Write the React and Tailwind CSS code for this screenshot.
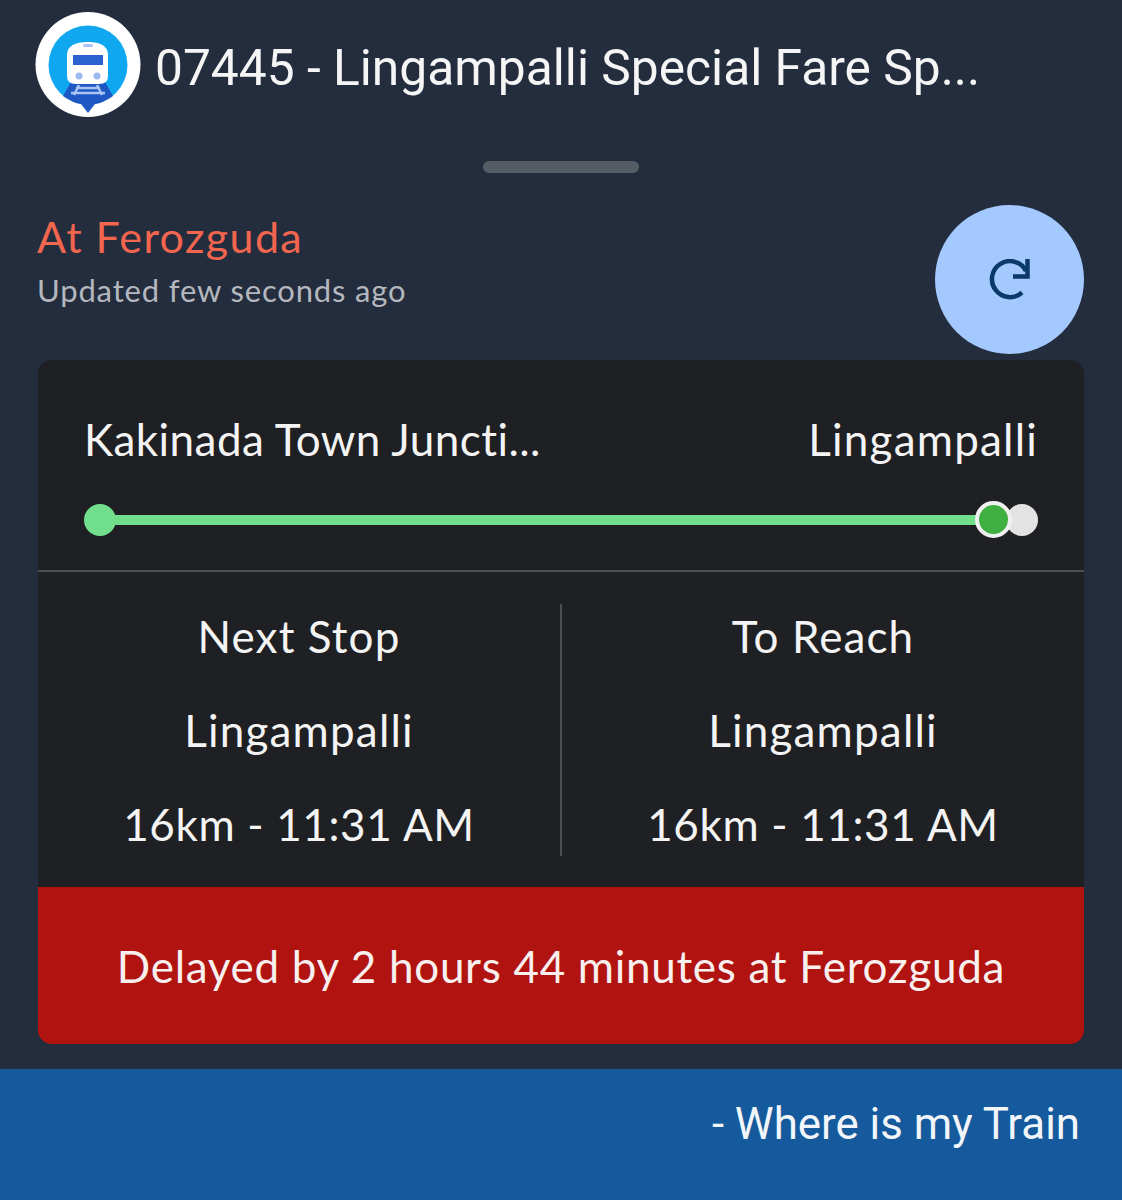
import React from "react";

// Small train-tracking badge shown beside the train name
function TrainBadge() {
  return (
    <svg width="106" height="106" viewBox="0 0 106 106" className="shrink-0">
      <circle cx="53" cy="52.5" r="52.5" fill="#ffffff" />
      <circle cx="53" cy="53" r="39.5" fill="#0fa8f0" />
      <path d="M36 70 H70 L78 84 Q68 91 60 92 L53 101 L46 92 Q38 91 28 84 Z" fill="#1f57c3" />
      <path d="M39 83 L44 73 M67 83 L62 73 M41 76 H65 M36 81 H70" stroke="#a9c4f5" strokeWidth="2.5" fill="none" />
      <path d="M32 42 Q33 30 53 30 Q72 30 73 42 V64 Q73 72 64 72 H41 Q32 72 32 64 Z" fill="#ffffff" />
      <rect x="48" y="32" width="10" height="3" rx="1.5" fill="#a9c4f5" />
      <rect x="38" y="43" width="30" height="10" fill="#2a62d0" />
      <circle cx="44" cy="64" r="3.5" fill="#9db9f2" />
      <circle cx="62" cy="64" r="3.5" fill="#9db9f2" />
    </svg>
  );
}

function RefreshIcon() {
  return (
    <svg width="42" height="42" viewBox="0 0 42 42" fill="none" stroke="#0b3a68" strokeWidth="4.5">
      <path d="M33 33.5 A18 18 0 1 1 37 12" />
      <path d="M38.5 0 V17.5 H24" />
    </svg>
  );
}

function StopColumn({ title, station, detail }) {
  return (
    <div className="flex-1 flex flex-col items-center h-full text-[#f4f4f4] text-[44px] leading-[50px] pt-[7px] gap-[44px]">
      <div className="tracking-[1.1px]">{title}</div>
      <div className="tracking-[1.2px]">{station}</div>
      <div className="tracking-[0.65px]">{detail}</div>
    </div>
  );
}

export default function App() {
  return (
    <div
      className="w-[1122px] h-[1200px] bg-[#232d3d] flex flex-col overflow-hidden"
      style={{ fontFamily: '"Lato", "Open Sans", sans-serif' }}
    >
      <header className="h-[135px] flex items-start pt-[12px] pl-[35px] gap-[14px]">
        <TrainBadge />
        <h1
          className="text-[49.7px] leading-[112px] font-normal text-[#f5f5f5] whitespace-nowrap"
          style={{ fontFamily: "Roboto, sans-serif" }}
        >
          07445 - Lingampalli Special Fare Sp...
        </h1>
      </header>

      <div className="flex justify-center pt-[26px]">
        <div className="w-[156px] h-[12px] rounded-full bg-[#565c66]" />
      </div>

      <section className="flex justify-between items-start px-[38px] pt-[32px] h-[187px]">
        <div className="pt-[7px] -ml-[1px]">
          <div className="text-[43px] leading-[50px] tracking-[1.4px] text-[#f2654e]">At Ferozguda</div>
          <div className="text-[31px] leading-[36px] tracking-[0.85px] mt-[10px] text-[#b4b8be]">Updated few seconds ago</div>
        </div>
        <button className="w-[149px] h-[149px] rounded-full bg-[#a3c9ff] flex items-center justify-center">
          <RefreshIcon />
        </button>
      </section>

      <section className="mx-[38px] h-[684px] rounded-[14px] overflow-hidden bg-[#1f2023] flex flex-col">
        <div className="h-[212px] px-[46px] pt-[54px] border-b-2 border-[#4d4e50]">
          <div className="flex justify-between text-[44px] leading-[50px] text-[#f4f4f4]">
            <span className="tracking-[0.45px]">Kakinada Town Juncti...</span>
            <span className="tracking-[1.2px]">Lingampalli</span>
          </div>
          <div className="relative h-[32px] mt-[40px]">
            <div className="absolute left-[10px] right-[40px] top-[11px] h-[10px] bg-[#71df8c]" />
            <div className="absolute left-0 top-0 w-[32px] h-[32px] rounded-full bg-[#71df8c]" />
            <div className="absolute right-0 top-0 w-[32px] h-[32px] rounded-full bg-[#e3e3e3]" />
            <div className="absolute right-[26px] top-[-3px] w-[37px] h-[37px] rounded-full bg-[#3fb041] border-[4px] border-[#f0f0f0]" />
          </div>
        </div>

        <div className="h-[315px] flex items-center">
          <div className="w-full h-[252px] flex">
            <StopColumn title="Next Stop" station="Lingampalli" detail="16km - 11:31 AM" />
            <div className="w-[2px] bg-[#4d4e50]" />
            <StopColumn title="To Reach" station="Lingampalli" detail="16km - 11:31 AM" />
          </div>
        </div>

        <div className="flex-1 bg-[#b11310] flex items-center justify-center text-[44px] leading-[50px] tracking-[0.7px] text-[#f8f0ef]">
          Delayed by 2 hours 44 minutes at Ferozguda
        </div>
      </section>

      <footer
        className="mt-[25px] flex-1 bg-[#155a9c] flex items-center justify-end pr-[42px] pb-[20px] text-[43.8px] text-[#f2f5f9]"
        style={{ fontFamily: "Roboto, sans-serif" }}
      >
        - Where is my Train
      </footer>
    </div>
  );
}
